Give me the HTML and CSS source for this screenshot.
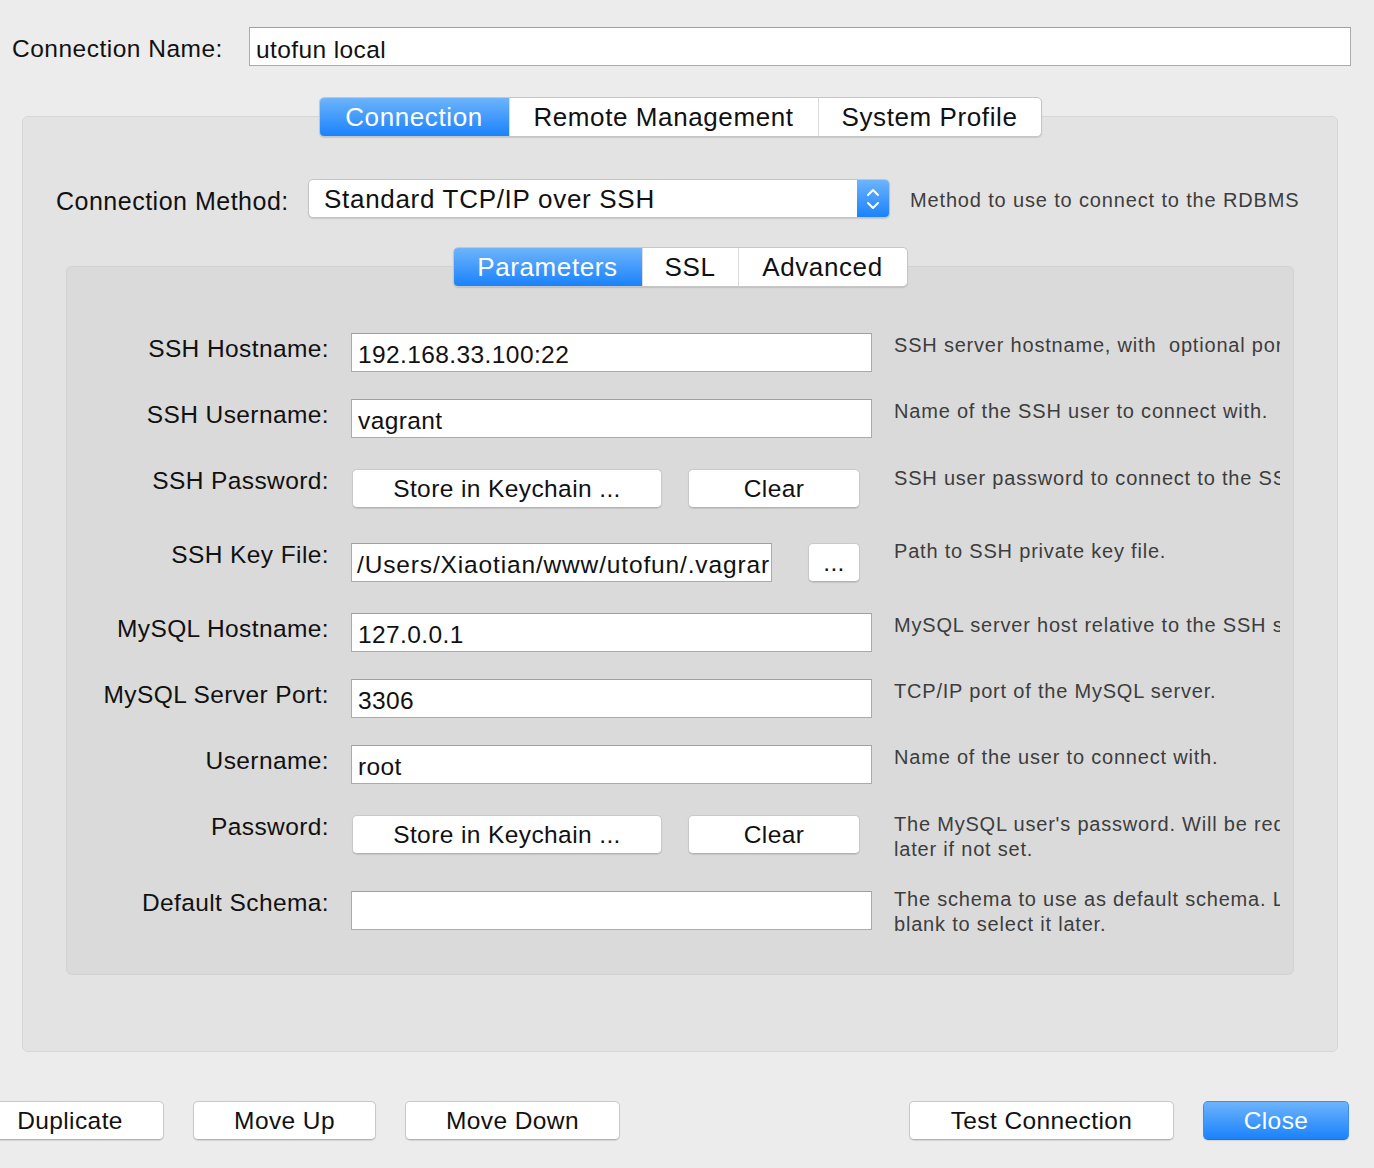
FILE: index.html
```html
<!DOCTYPE html>
<html>
<head>
<meta charset="utf-8">
<link rel="stylesheet" href="styles.css">
</head>
<body>
<div class="name-row">
  <div class="name-label">Connection Name:</div>
  <div class="field name-field">utofun local</div>
</div>

<div class="tabs-wrap">
  <div class="seg">
    <div class="seg-item active w-conn">Connection</div>
    <div class="seg-item w-remote">Remote Management</div>
    <div class="seg-item w-sys">System Profile</div>
  </div>
</div>

<div class="outer">
  <div class="method-row">
    <div class="method-label">Connection Method:</div>
    <div class="select">
      <span class="select-text">Standard TCP/IP over SSH</span>
      <span class="stepper">
        <svg width="32" height="37" viewBox="0 0 32 37">
          <polyline points="11,15 16,10 21,15" fill="none" stroke="#fff" stroke-width="2" stroke-linecap="round" stroke-linejoin="round"/>
          <polyline points="11,23 16,28 21,23" fill="none" stroke="#fff" stroke-width="2" stroke-linecap="round" stroke-linejoin="round"/>
        </svg>
      </span>
    </div>
    <div class="method-help">Method to use to connect to the RDBMS</div>
  </div>

  <div class="seg seg-inner">
    <div class="seg-item active w-param">Parameters</div>
    <div class="seg-item w-ssl">SSL</div>
    <div class="seg-item w-adv">Advanced</div>
  </div>

  <div class="inner">
    <div class="row h66">
      <div class="label">SSH Hostname:</div>
      <div class="ctrl"><div class="field wide">192.168.33.100:22</div></div>
      <div class="help">SSH server hostname, with&nbsp; optional port number.</div>
    </div>
    <div class="row h70">
      <div class="label">SSH Username:</div>
      <div class="ctrl"><div class="field wide">vagrant</div></div>
      <div class="help">Name of the SSH user to connect with.</div>
    </div>
    <div class="row h74 alt-btn">
      <div class="label">SSH Password:</div>
      <div class="ctrl btns">
        <div class="btn btn-store">Store in Keychain ...</div>
        <div class="btn btn-clear">Clear</div>
      </div>
      <div class="help">SSH user password to connect to the SSH tunnel.</div>
    </div>
    <div class="row h70 alt">
      <div class="label">SSH Key File:</div>
      <div class="ctrl keyrow">
        <div class="field key-field">/Users/Xiaotian/www/utofun/.vagrar</div>
        <div class="btn btn-dots">...</div>
      </div>
      <div class="help">Path to SSH private key file.</div>
    </div>
    <div class="row h66">
      <div class="label">MySQL Hostname:</div>
      <div class="ctrl"><div class="field wide">127.0.0.1</div></div>
      <div class="help">MySQL server host relative to the SSH server.</div>
    </div>
    <div class="row h66">
      <div class="label">MySQL Server Port:</div>
      <div class="ctrl"><div class="field wide">3306</div></div>
      <div class="help">TCP/IP port of the MySQL server.</div>
    </div>
    <div class="row h70">
      <div class="label">Username:</div>
      <div class="ctrl"><div class="field wide">root</div></div>
      <div class="help">Name of the user to connect with.</div>
    </div>
    <div class="row h76 alt-btn">
      <div class="label">Password:</div>
      <div class="ctrl btns">
        <div class="btn btn-store">Store in Keychain ...</div>
        <div class="btn btn-clear">Clear</div>
      </div>
      <div class="help">The MySQL user's password. Will be requested<br>later if not set.</div>
    </div>
    <div class="row alt">
      <div class="label">Default Schema:</div>
      <div class="ctrl"><div class="field wide"></div></div>
      <div class="help">The schema to use as default schema. Leave<br>blank to select it later.</div>
    </div>
  </div>
</div>

<div class="bottom">
  <div class="group">
    <div class="btn b-dup">Duplicate</div>
    <div class="btn b-up">Move Up</div>
    <div class="btn b-down">Move Down</div>
  </div>
  <div class="group">
    <div class="btn b-test">Test Connection</div>
    <div class="btn primary b-close">Close</div>
  </div>
</div>
</body>
</html>
```

FILE: styles.css
```css
html, body {
  margin: 0;
  padding: 0;
}
body {
  background: #ececec;
  font-family: "Liberation Sans", Arial, sans-serif;
  color: #111;
  width: 1374px;
  height: 1168px;
  overflow: hidden;
}

/* connection name */
.name-row {
  display: flex;
  align-items: flex-start;
  margin-top: 27px;
  padding-left: 12px;
  height: 39px;
}
.name-label {
  width: 237px;
  font-size: 24.5px;
  letter-spacing: 0.5px;
  line-height: 28px;
  margin-top: 8px;
}
.field {
  box-sizing: border-box;
  height: 39px;
  background: #fff;
  border: 1px solid #ababab;
  border-top-color: #9f9f9f;
  padding: 7px 0 0 6px;
  font-size: 24.5px;
  letter-spacing: 0.4px;
  line-height: 28px;
  white-space: nowrap;
  overflow: hidden;
  color: #111;
}
.name-field {
  width: 1102px;
  padding-top: 8px;
}

/* segmented controls */
.tabs-wrap {
  display: flex;
  justify-content: center;
  width: 1316px;
  margin: 31px 0 0 22px;
  position: relative;
  z-index: 1;
}
.seg {
  display: flex;
  width: fit-content;
  margin: 0 auto;
  border: 1px solid #c6c6c6;
  border-radius: 5px;
  background: #fff;
  overflow: hidden;
  box-shadow: 0 1px 1px rgba(0,0,0,0.12);
  position: relative;
  z-index: 1;
}
.seg-item {
  box-sizing: border-box;
  height: 38px;
  line-height: 38px;
  text-align: center;
  font-size: 26px;
  letter-spacing: 0.6px;
  color: #111;
  border-left: 1px solid #dcdcdc;
}
.seg-item:first-child {
  border-left: none;
}
.seg-item.active {
  background: linear-gradient(#6db4fb, #1a82fb);
  color: #fff;
}
.w-conn { width: 189px; }
.w-remote { width: 309px; }
.w-sys { width: 223px; }
.w-param { width: 188px; }
.w-ssl { width: 96px; }
.w-adv { width: 169px; }

/* outer panel */
.outer {
  box-sizing: border-box;
  width: 1316px;
  height: 936px;
  margin: -21px 0 0 22px;
  padding-top: 62px;
  background: #e3e3e3;
  border: 1px solid #d6d6d6;
  border-radius: 6px;
}
.method-row {
  display: flex;
  align-items: center;
  height: 39px;
  padding-left: 33px;
}
.method-label {
  width: 252px;
  font-size: 25px;
  letter-spacing: 0.5px;
  line-height: 30px;
  margin-top: 4px;
  white-space: nowrap;
}
.select {
  box-sizing: border-box;
  width: 582px;
  height: 39px;
  display: flex;
  align-items: stretch;
  background: #fff;
  border: 1px solid #c4c4c4;
  border-radius: 5px;
  overflow: hidden;
  box-shadow: 0 1px 1px rgba(0,0,0,0.12);
}
.select-text {
  flex: 1;
  padding-left: 15px;
  font-size: 26px;
  letter-spacing: 0.7px;
  line-height: 37px;
  margin-top: 1px;
}
.stepper {
  width: 32px;
  background: linear-gradient(#6db4fb, #1a82fb);
  display: flex;
}
.method-help {
  margin-left: 20px;
  margin-top: 4px;
  font-size: 20px;
  letter-spacing: 0.85px;
  color: #3d3d3d;
  line-height: 25px;
}

.seg-inner {
  margin-top: 29px;
}

/* inner panel */
.inner {
  box-sizing: border-box;
  height: 709px;
  margin: -21px 43px 0 43px;
  padding-top: 66px;
  background: #dadada;
  border: 1px solid #d1d1d1;
  border-radius: 6px;
}
.row {
  display: flex;
  align-items: flex-start;
}
.h66 { height: 66px; }
.h70 { height: 70px; }
.h74 { height: 74px; }
.h76 { height: 76px; }
.label {
  width: 262px;
  text-align: right;
  font-size: 24.5px;
  letter-spacing: 0.4px;
  line-height: 28px;
  margin-top: 2px;
  color: #111;
  white-space: nowrap;
}
.ctrl {
  margin-left: 22px;
  width: 521px;
}
.wide {
  width: 521px;
}
.help {
  margin-left: 22px;
  width: 386px;
  overflow: hidden;
  white-space: nowrap;
  font-size: 20px;
  letter-spacing: 0.8px;
  line-height: 25px;
  color: #3d3d3d;
  margin-top: 0;
}
.alt .label { margin-top: -2px; }
.alt .help { margin-top: -4px; }
.alt-btn .label { margin-top: -2px; }
.alt-btn .help { margin-top: -3px; }

.btns {
  display: flex;
  padding-left: 1px;
  box-sizing: border-box;
}
.keyrow {
  display: flex;
}
.key-field {
  width: 421px;
  padding-left: 5px;
  letter-spacing: 0.85px;
}

/* buttons */
.btn {
  box-sizing: border-box;
  height: 39px;
  background: #fff;
  border: 1px solid #c9c9c9;
  border-bottom-color: #b3b3b3;
  border-radius: 5px;
  box-shadow: 0 1px 1px rgba(0,0,0,0.1);
  text-align: center;
  font-size: 24.5px;
  letter-spacing: 0.4px;
  line-height: 37px;
  color: #111;
  white-space: nowrap;
}
.btn-store { width: 310px; }
.btn-clear { width: 172px; margin-left: 26px; }
.btn-dots { width: 52px; margin-left: 36px; }

.btn.primary {
  background: linear-gradient(#6db4fb, #1a82fb);
  border-color: #3a8ef0;
  border-bottom-color: #1f72dc;
  color: #fff;
}

/* bottom bar */
.bottom {
  display: flex;
  justify-content: space-between;
  margin: 49px 0 0 -24px;
  padding-right: 25px;
  height: 39px;
}
.group {
  display: flex;
  gap: 29px;
}
.b-dup { width: 188px; }
.b-up { width: 183px; }
.b-down { width: 215px; }
.b-test { width: 265px; }
.b-close { width: 146px; }
```
